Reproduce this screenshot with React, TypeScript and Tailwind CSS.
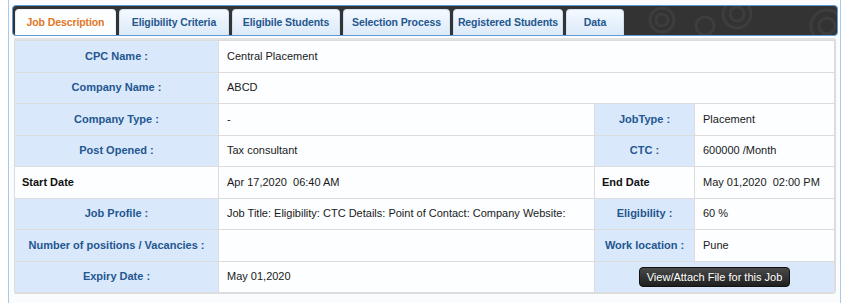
import React from "react";

const tabs: [string, string][] = [
  ["Job Description", "w-[101px]"],
  ["Eligibility Criteria", "w-[110px]"],
  ["Eligibile Students", "w-[108px]"],
  ["Selection Process", "w-[107px]"],
  ["Registered Students", "w-[110px]"],
  ["Data", "w-[58px]"],
];

function Label({ children, span }: { children?: React.ReactNode; span?: number }) {
  return (
    <td
      colSpan={span}
      className="border border-[#dcdcdc] bg-[#dae8fc] text-center font-bold text-[#23578f] px-2"
    >
      {children}
    </td>
  );
}

function Val({ children, span }: { children?: React.ReactNode; span?: number }) {
  return (
    <td colSpan={span} className="border border-[#dcdcdc] bg-[#fcfeff] text-[#1a1a1a] px-[8px]">
      {children}
    </td>
  );
}

function Plain({ children }: { children?: React.ReactNode }) {
  return (
    <td className="border border-[#dcdcdc] bg-[#fcfeff] font-bold text-[#111] px-[7px]">
      {children}
    </td>
  );
}

export default function App() {
  return (
    <div
      className="w-[849px] h-[303px] bg-white overflow-hidden"
      style={{ fontFamily: '"Liberation Sans", Arial, sans-serif' }}
    >
      <div className="ml-[8px] w-[833px] h-[303px] border-l border-r border-[#a9c9ea] bg-[#fafcfe] pt-[5px] pl-[3px] pr-[2px]">
        {/* tab bar */}
        <div className="relative h-[31px] rounded-[4px] border border-[#5d9ad6] bg-[#333333] overflow-hidden flex items-end pl-[2px] gap-[3px] w-[826px]">
          <svg
            className="absolute right-0 top-0"
            width="260"
            height="31"
            viewBox="0 0 260 31"
          >
            <g fill="none" stroke="#3d3d3d" strokeWidth="3">
              <circle cx="10" cy="14" r="6" />
              <circle cx="22" cy="22" r="10" />
              <circle cx="85" cy="14" r="12" />
              <circle cx="85" cy="14" r="6" />
              <circle cx="128" cy="20" r="9" />
              <circle cx="160" cy="8" r="14" />
              <circle cx="160" cy="8" r="7" />
              <circle cx="250" cy="20" r="16" />
              <circle cx="250" cy="20" r="8" />
            </g>
          </svg>
          {tabs.map(([t, w], i) => (
            <div
              key={t}
              className={
                "relative h-[26px] rounded-t-[4px] flex items-center justify-center text-[10.5px] tracking-[-0.1px] font-bold border-t border-l border-r " +
                w +
                " " +
                (i === 0
                  ? "bg-[#fdfeff] text-[#e3761f] border-[#e8f1fa]"
                  : "bg-gradient-to-b from-[#f4f9ff] to-[#dceaf8] text-[#23578f] border-[#cfe0f1]")
              }
            >
              {t}
            </div>
          ))}
        </div>
        {/* table */}
        <div className="mt-[2px] ml-[2px] w-[821px] rounded-br-[4px] border-t-2 border-[#e2e2e2] shadow-[1px_1px_0_#dcdcdc] overflow-hidden">
          <table className="w-full border-collapse text-[11px] leading-none">
            <colgroup>
              <col className="w-[204px]" />
              <col className="w-[376px]" />
              <col className="w-[100px]" />
              <col />
            </colgroup>
            <tbody>
              <tr className="h-[31.5px]">
                <Label>CPC Name :</Label>
                <Val span={3}>Central Placement</Val>
              </tr>
              <tr className="h-[31.5px]">
                <Label>Company Name :</Label>
                <Val span={3}>ABCD</Val>
              </tr>
              <tr className="h-[31.5px]">
                <Label>Company Type :</Label>
                <Val>-</Val>
                <Label>JobType :</Label>
                <Val>Placement</Val>
              </tr>
              <tr className="h-[31.5px]">
                <Label>Post Opened :</Label>
                <Val>Tax consultant</Val>
                <Label>CTC :</Label>
                <Val>600000 /Month</Val>
              </tr>
              <tr className="h-[31.5px]">
                <Plain>Start Date</Plain>
                <Val>Apr 17,2020&nbsp; 06:40 AM</Val>
                <Plain>End Date</Plain>
                <Val>May 01,2020&nbsp; 02:00 PM</Val>
              </tr>
              <tr className="h-[31.5px]">
                <Label>Job Profile :</Label>
                <Val>Job Title: Eligibility: CTC Details: Point of Contact: Company Website:</Val>
                <Label>Eligibility :</Label>
                <Val>60 %</Val>
              </tr>
              <tr className="h-[31.5px]">
                <Label>Number of positions / Vacancies :</Label>
                <Val></Val>
                <Label>Work location :</Label>
                <Val>Pune</Val>
              </tr>
              <tr className="h-[31.5px]">
                <Label>Expiry Date :</Label>
                <Val>May 01,2020</Val>
                <td colSpan={2} className="border border-[#dcdcdc] bg-[#dae8fc] text-center">
                  <span className="inline-block rounded-[4px] bg-gradient-to-b from-[#4a4a4a] to-[#1f1f1f] text-white text-[11px] px-[7px] py-[3px] leading-[12px] border border-[#111]">
                    View/Attach File for this Job
                  </span>
                </td>
              </tr>
            </tbody>
          </table>
        </div>
      </div>
    </div>
  );
}
